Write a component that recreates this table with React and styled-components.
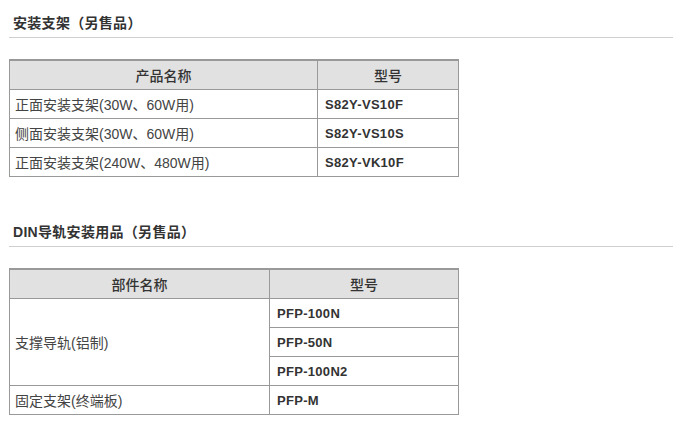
import React from 'react';
import styled, {createGlobalStyle} from 'styled-components';

const GlobalStyle = createGlobalStyle`
  body {
    margin: 0;
    background: #fff;
    font-family: "Liberation Sans", Arial, "Noto Sans CJK SC", sans-serif;
    color: #333;
  }
`;

const Page = styled.div`
  width: 664px;
  padding: 13px 0 0 9px;
`;

const Section = styled.section`
  margin-bottom: 45px;

  &:last-child {
    margin-bottom: 0;
  }
`;

const Heading = styled.h3`
  margin: 0 0 21px;
  padding: 0 0 4px 4px;
  font-size: 14px;
  line-height: 20px;
  font-weight: bold;
  letter-spacing: 0.3px;
  color: #333;
  border-bottom: 1px solid #cfcfcf;
`;

const Table = styled.table`
  width: 450px;
  border-collapse: collapse;
  border-top: 2px solid #999;
  font-size: 14px;
  color: #444;
`;

const Th = styled.th`
  height: 28px;
  padding: 0 5px;
  background: #e1e1e1;
  border: 1px solid #999;
  border-top: 2px solid #999;
  font-weight: 500;
  color: #333;
  text-align: center;
  width: ${p => p.$w || 'auto'};
`;

const Td = styled.td`
  height: 28px;
  padding: 0 5px 0 ${p => (p.$model ? '7px' : '5px')};
  border: 1px solid #999;
  vertical-align: middle;
  font-size: ${p => (p.$model ? '13px' : '14px')};
  letter-spacing: ${p => (p.$model ? '0.3px' : '0')};
  font-weight: ${p => (p.$model ? 'bold' : 'normal')};
  color: ${p => (p.$model ? '#333' : '#444')};
`;

const bracketRows = [
  ['正面安装支架(30W、60W用)', 'S82Y-VS10F'],
  ['侧面安装支架(30W、60W用)', 'S82Y-VS10S'],
  ['正面安装支架(240W、480W用)', 'S82Y-VK10F'],
];

export default function App() {
  return (
    <Page>
      <GlobalStyle />
      <Section>
        <Heading>安装支架（另售品）</Heading>
        <Table>
          <thead>
            <tr>
              <Th $w="297px">产品名称</Th>
              <Th>型号</Th>
            </tr>
          </thead>
          <tbody>
            {bracketRows.map(([name, model]) => (
              <tr key={model}>
                <Td>{name}</Td>
                <Td $model>{model}</Td>
              </tr>
            ))}
          </tbody>
        </Table>
      </Section>
      <Section>
        <Heading>DIN导轨安装用品（另售品）</Heading>
        <Table>
          <thead>
            <tr>
              <Th $w="249px">部件名称</Th>
              <Th>型号</Th>
            </tr>
          </thead>
          <tbody>
            <tr>
              <Td rowSpan={3}>支撑导轨(铝制)</Td>
              <Td $model>PFP-100N</Td>
            </tr>
            <tr>
              <Td $model>PFP-50N</Td>
            </tr>
            <tr>
              <Td $model>PFP-100N2</Td>
            </tr>
            <tr>
              <Td>固定支架(终端板)</Td>
              <Td $model>PFP-M</Td>
            </tr>
          </tbody>
        </Table>
      </Section>
    </Page>
  );
}
